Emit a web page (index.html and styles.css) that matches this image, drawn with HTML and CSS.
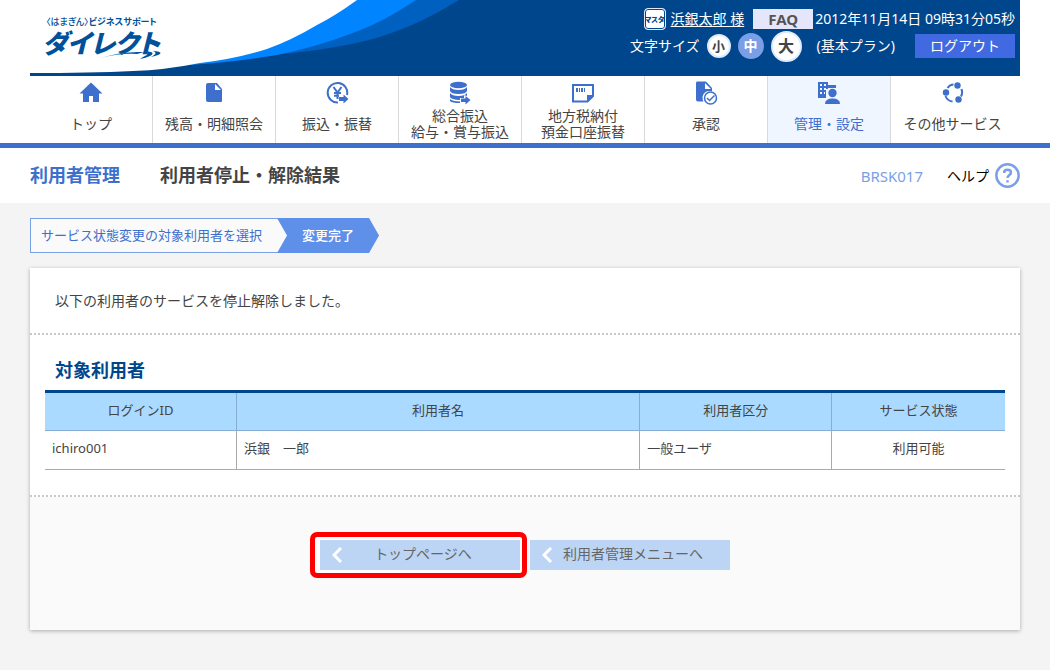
FILE: index.html
```html
<!DOCTYPE html>
<html lang="ja">
<head>
<meta charset="utf-8">
<meta name="viewport" content="width=device-width, initial-scale=1">
<title>利用者停止・解除結果</title>
<link rel="stylesheet" href="styles.css">
</head>
<body>
<header class="masthead">
  <svg class="masthead-wave" viewBox="0 0 480 76" aria-hidden="true">
    <path fill="#00468c" d="M0 0H480V76H0z"/>
    <path fill="#0060c0" d="M0 0H429Q411 11 393 20Q370 31 343 39Q320 45 287 50Q265 53 240 55L0 60z"/>
    <path fill="#0084ff" d="M0 0H386Q374 8 360 16Q340 27 320 34Q286 47 247 55Q200 63 145 66L0 70z"/>
    <path fill="#fff" d="M0 0H327Q305 16 287 25Q262 40 237 49Q205 59 170 63Q135 70 103 71Q60 73 0 73z"/>
  </svg>
  <a class="logo" href="#">
    <span class="logo-tagline"><span class="logo-bank">〈はまぎん〉</span>ビジネスサポート</span>
    <span class="logo-name">ダイレクト</span>
    <svg class="logo-swoosh" viewBox="0 0 60 11" aria-hidden="true">
      <defs><linearGradient id="swoosh"><stop offset="0" stop-color="#2aa5e8"/><stop offset=".6" stop-color="#00509a"/></linearGradient></defs>
      <path fill="url(#swoosh)" d="M0 8Q20 1 43 2L36 4Q20 3 0 8zM44 1Q56 2 49 6Q45 8 39 9L42 7Q50 4 44 1zM52 1Q64 2 57 5Q54 6 50 7Q58 3 52 1z"/>
    </svg>
  </a>
  <div class="account">
    <div class="account-row">
      <span class="role">マスタ</span>
      <a class="user" href="#">浜銀太郎 様</a>
      <button class="faq" type="button">FAQ</button>
      <time class="clock" datetime="2012-11-14T09:31:05">2012年11月14日 09時31分05秒</time>
    </div>
    <div class="account-row settings-row">
      <span>文字サイズ</span>
      <div class="sizes">
        <button class="size size-small" type="button">小</button>
        <button class="size size-medium" type="button">中</button>
        <button class="size size-large" type="button">大</button>
      </div>
      <span class="plan">(基本プラン)</span>
      <button class="logout" type="button">ログアウト</button>
    </div>
  </div>
</header>

<nav class="global-nav">
  <ul class="nav-list">
    <li><a href="#"><svg viewBox="0 0 24 24"><path d="M12 1.500L.5 12.500H4V21h6v-6h4v6h6v-8.500h3.500z"/></svg><span>トップ</span></a></li>
    <li><a href="#"><svg viewBox="0 0 24 24"><path fill-rule="evenodd" d="M6 2h9l5 6v12q0 1-1 1H6q-2 0-2-2V4q0-2 2-2zM13 3v6h6z"/></svg><span>残高・明細照会</span></a></li>
    <li><a href="#"><svg viewBox="0 0 24 24"><path class="line" d="M13 21.500A9.800 9.800 0 1 1 22 14M8.500 6l4 5.500 4-5.500M12.500 11.500V18M9 12h7M9 14.800h5"/><path d="M14 16h4.500v-2.500l5 4.500-5 4.500V20H14z"/></svg><span>振込・振替</span></a></li>
    <li><a href="#"><svg viewBox="0 0 24 24"><ellipse cx="10.500" cy="4" rx="8.500" ry="3.200"/><path d="M2 6q2 3 8.500 3T19 6v4q-1 3-8.500 3T2 10zM2 12q2 3 8.500 3T19 12v3l-3-1v3h-4v2Q3 18.500 2 16zM2 18q2 2 10 2.500V22Q4 22 2 20zM13 17.500h4.500V15l5 4-5 4.500V21H13z"/></svg><span>総合振込<br>給与・賞与振込</span></a></li>
    <li><a href="#"><svg viewBox="0 0 24 24"><path class="line" d="M2 4h20v11l-5.500 5.500H2z"/><path d="M22 14v2l-6 5v-7zM5 7h2v4H5zM8 7h1v4H8zM10 7h2v4h-2zM13 7h1v4h-1z"/></svg><span>地方税納付<br>預金口座振替</span></a></li>
    <li><a href="#"><svg viewBox="0 0 24 24"><path fill-rule="evenodd" d="M3 .5h9L18 7v3.200Q10 9 8.500 16q0 3 1 4.500H4q-2 0-2-2v-16q0-2 1-2zM11 2v6h6z"/><circle class="line thin" cx="16.500" cy="17" r="6"/><path class="line thin" d="M13 17l2.500 2.500 5-5"/></svg><span>承認</span></a></li>
    <li class="current"><a href="#" aria-current="page"><svg viewBox="0 0 24 24"><path fill-rule="evenodd" d="M1 1h10v3h8v2h-8v2H9v9H1zM3 3v2h2V3zM7 3v2h2V3zM3 7v2h2V7zM7 7v2h2V7zM3 11v2h2v-2zM7 11v2h1v-2z"/><path d="M11 6h8v1h-8z"/><circle cx="15.500" cy="12" r="4.200"/><path d="M8 23q0-5.500 7.500-5.500T23 23z"/></svg><span>管理・設定</span></a></li>
    <li><a href="#"><svg viewBox="0 0 24 24"><path class="line" d="M6.500 7Q9 3.500 12.500 3.500M4.500 15Q6.500 20 11.500 20.500M20.500 8Q22 12 20 15.500"/><circle cx="16.500" cy="4.500" r="3.200"/><circle cx="5" cy="11.500" r="3.200"/><circle cx="17.500" cy="18.500" r="3.200"/></svg><span>その他サービス</span></a></li>
  </ul>
</nav>

<div class="page-title">
  <h1 class="title"><span class="title-category">利用者管理</span><span>利用者停止・解除結果</span></h1>
  <span class="screen-id">BRSK017</span>
  <a class="help" href="#">ヘルプ
    <svg viewBox="0 0 24 24" aria-hidden="true"><circle cx="12" cy="12" r="10.700"/><path d="M8.700 9.500Q8.700 6.500 12 6.500T15.300 9.300C15.300 11.500 12 11.700 12 14.500M12 16.500V18.700"/></svg>
  </a>
</div>

<main class="content">
  <ol class="steps">
    <li class="step">サービス状態変更の対象利用者を選択</li>
    <li class="step step-current" aria-current="step">変更完了</li>
  </ol>
  <section class="panel">
    <p class="message">以下の利用者のサービスを停止解除しました。</p>
    <div class="result">
      <h2 class="result-title">対象利用者</h2>
      <table class="users">
        <thead>
          <tr><th class="col-id" scope="col">ログインID</th><th class="col-name" scope="col">利用者名</th><th class="col-type" scope="col">利用者区分</th><th class="col-status" scope="col">サービス状態</th></tr>
        </thead>
        <tbody>
          <tr><td>ichiro001</td><td>浜銀　一郎</td><td>一般ユーザ</td><td class="status">利用可能</td></tr>
        </tbody>
      </table>
    </div>
    <div class="actions">
      <div class="highlight">
        <button class="back" type="button"><svg viewBox="0 0 10 16" aria-hidden="true"><path d="M9 1L2 8l7 7"/></svg><span>トップページへ</span></button>
      </div>
      <button class="back" type="button"><svg viewBox="0 0 10 16" aria-hidden="true"><path d="M9 1L2 8l7 7"/></svg><span>利用者管理メニューへ</span></button>
    </div>
  </section>
</main>
</body>
</html>
```
FILE: styles.css
```css
* { box-sizing: border-box; }

body {
  margin: 0;
  background: #f4f4f4;
  color: #444;
  font: 14px/20px "Noto Sans", "Noto Sans CJK JP", sans-serif;
}

body, button { font-family: "Noto Sans", "Noto Sans CJK JP", sans-serif; }
html { background: #f4f4f4; }
a { color: inherit; text-decoration: none; }
ul, ol { margin: 0; padding: 0; list-style: none; }
button { border: 0; padding: 0; font-size: 14px; line-height: 20px; cursor: pointer; }

/* Masthead */
.masthead {
  position: relative;
  display: flex;
  justify-content: space-between;
  height: 76px;
  background: #00468c;
  border: 0 solid #fff;
  border-width: 0 30px;
}
.masthead-wave { position: absolute; left: 0; top: 0; width: 480px; height: 76px; }
.logo {
  position: relative;
  display: flex;
  flex-direction: column;
  padding: 16px 0 0 16px;
  color: #00509a;
  font-family: "Noto Sans CJK JP", sans-serif;
  font-feature-settings: "palt";
  white-space: nowrap;
}
.logo-tagline { font-size: 9px; line-height: 12px; font-weight: 700; }
.logo-bank { font-size: 9px; font-weight: 500; }
.logo-name { margin-left: -4px; font-size: 26px; line-height: 28px; font-weight: 900; font-style: italic; }
.logo-swoosh { position: absolute; left: 71px; top: 50px; width: 60px; height: 11px; }

.account {
  position: relative;
  padding: 8px 5px 0 0;
  color: #fff;
  white-space: nowrap;
}
.account-row { display: flex; align-items: center; justify-content: flex-end; height: 22px; }
.role {
  display: flex;
  align-items: center;
  justify-content: center;
  width: 22px;
  height: 22px;
  margin-right: 5px;
  border: 1px solid #e6e6fa;
  border-radius: 4px;
  background: #fff;
  box-shadow: inset 0 0 0 1px #00468c;
  color: #00468c;
  font: 900 7px/16px "Noto Sans CJK JP", sans-serif;
  font-feature-settings: "palt";
}
.user { margin-right: 9px; text-decoration: underline; text-underline-offset: 2px; }
.faq { width: 60px; height: 20px; margin-right: 2px; background: #e6e6fa; color: #555; font-size: 15px; font-weight: 700; }
.settings-row { height: 32px; }
.sizes { display: flex; align-items: center; gap: 7px; margin: 0 15px 0 7px; }
.size { border-radius: 50%; background: #fff; color: #444; font-weight: 700; }
.size-small { width: 24px; height: 24px; border: 2px solid #e0eafa; font-size: 13px; }
.size-medium { width: 26px; height: 26px; background: #7a9fe6; color: #fff; }
.size-large { width: 31px; height: 31px; border: 2px solid #e0eafa; font-size: 16px; }
.plan { margin-right: 20px; }
.logout { width: 100px; height: 24px; background: #4169e1; color: #fff; }

/* Global navigation */
.global-nav { padding: 0 36px 0 30px; border-bottom: 5px solid #3e6fcd; background: #fff; }
.nav-list { display: grid; grid-template-columns: repeat(8, minmax(0, 1fr)); }
.nav-list li { border-right: 1px solid #d9d9d9; }
.nav-list li:last-child { border-right: 0; }
.nav-list a { display: flex; flex-direction: column; align-items: center; height: 67px; padding-top: 5px; white-space: nowrap; }
.nav-list svg { flex: none; width: 24px; height: 24px; fill: #3e6fcd; }
.nav-list .line { fill: none; stroke: #3e6fcd; stroke-width: 2; }
.nav-list .thin { stroke-width: 1.500; }
.nav-list span { display: flex; align-items: center; flex: 1; line-height: 16px; text-align: center; }
.nav-list .current { background: #eff6ff; color: #3e6fcd; }

/* Page title */
.page-title { display: flex; align-items: center; height: 55px; padding: 0 30px; background: #fff; }
.title { display: flex; gap: 40px; flex: 1; margin: 0; padding-bottom: 2px; font-size: 18px; line-height: 24px; font-weight: 700; }
.title-category { color: #3e6fcd; }
.screen-id { margin-right: 24px; color: #7a9fe6; font-size: 15px; }
.help { display: flex; align-items: center; gap: 6px; color: #000; }
.help svg { width: 25px; height: 25px; fill: none; stroke: #7a9fe6; stroke-width: 2.400; }

/* Progress steps */
.content { padding: 15px 30px 40px; }
.steps { display: flex; font-size: 13px; }
.step {
  height: 35px;
  padding: 0 25px 0 10px;
  border: 1px solid #7aa0e6;
  border-right: 0;
  background: #fafafa;
  color: #3e6fcd;
  line-height: 33px;
}
.step-current {
  margin-left: -10px;
  padding: 0 25px;
  border: 0;
  background: #5e8fe9;
  color: #fff;
  font-weight: 500;
  line-height: 35px;
  clip-path: polygon(0 0, calc(100% - 10px) 0, 100% 50%, calc(100% - 10px) 100%, 0 100%, 10px 50%);
}

/* Result panel */
.panel { margin-top: 15px; background: #fff; box-shadow: 0 1px 4px rgba(0, 0, 0, .3); }
.message { margin: 0; padding: 23px 25px 22px; border-bottom: 2px dotted #c8c8c8; }
.result { padding: 23px 15px 25px; border-bottom: 2px dotted #c8c8c8; }
.result-title { margin: 0 0 8px; padding-left: 10px; color: #00468c; font-size: 18px; line-height: 24px; }
.users { width: 100%; table-layout: fixed; border-collapse: separate; border-spacing: 0; border-top: 3px solid #00468c; font-size: 13px; line-height: 20px; }
.users th, .users td { border-right: 1px solid #aaa; border-bottom: 1px solid #aaa; }
.users th { padding: 7px 7px 10px; border-color: #86aed3; background: #aadaff; font-weight: 400; }
.users td { padding: 7px 7px 11px; }
.users th:last-child, .users td:last-child { border-right: 0; }
.col-id, .col-type { width: 20%; }
.col-name { width: 42%; }
.col-status { width: 18%; }
.users .status { text-align: center; }

/* Actions */
.actions { display: flex; justify-content: center; gap: 10px; padding: 43px 15px 60px; background: #fafafa; }
.back { display: flex; align-items: center; width: 200px; height: 30px; padding: 0 16px 0 12px; background: #bcd5f5; color: #666; }
.back svg { width: 10px; height: 16px; fill: none; stroke: #fff; stroke-width: 3; }
.back span { flex: 1; padding-bottom: 2px; }
.highlight { position: relative; isolation: isolate; }
.highlight::before {
  content: "";
  position: absolute;
  z-index: -1;
  inset: -8px -7px -8px -10px;
  border: 5px solid #f00;
  border-radius: 7px;
  background: #fff;
}
```
